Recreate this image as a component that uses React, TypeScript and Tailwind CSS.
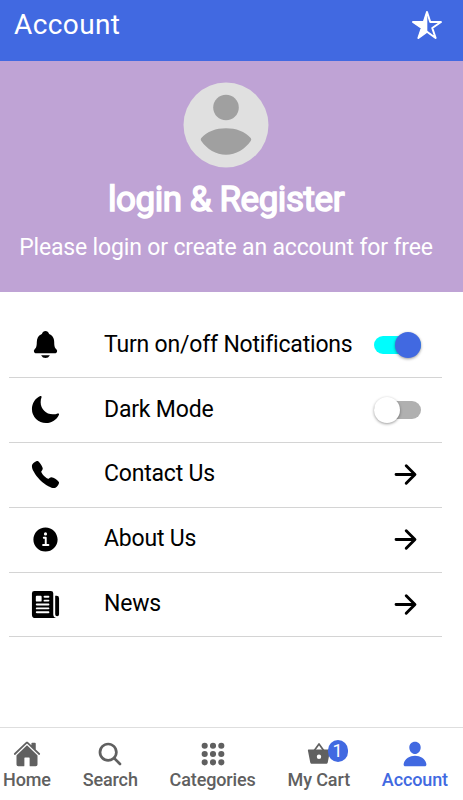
import { useState } from "react"
import {
  IoApps,
  IoArrowForward,
  IoCall,
  IoHome,
  IoInformationCircle,
  IoMoon,
  IoNewspaper,
  IoNotifications,
  IoPerson,
  IoSearch,
  IoStarHalf,
} from "react-icons/io5"

function BasketIcon() {
  return (
    <svg viewBox="0 0 24 28" className="h-7 w-6" fill="currentColor">
      <path
        fillRule="evenodd"
        d="M1.800 9.500H22.200c.6 0 1 .5.9 1.100l-2.300 11.600c-.2 1-.9 1.600-1.900 1.600H5.100c-1 0-1.700-.6-1.900-1.600L.9 10.600c-.1-.6.3-1.100.9-1.100zM12 14.500a2.200 2.200 0 1 0 0 4.400 2.200 2.200 0 0 0 0-4.400z"
      />
      <path d="M7.300 10.500 12 4l4.700 6.500" fill="none" stroke="currentColor" strokeWidth="1.700" strokeLinejoin="round" />
    </svg>
  )
}

function Toggle({ label, on, onChange }: { label: string; on: boolean; onChange: () => void }) {
  return (
    <button
      type="button"
      role="switch"
      aria-label={label}
      aria-checked={on}
      onClick={onChange}
      className={`relative mr-[21px] h-[18px] w-[47px] rounded-full ${on ? "bg-[#00fdfd]" : "bg-[#b0b0b0]"}`}
    >
      <span
        className={`absolute -top-1 size-[26px] rounded-full shadow-[0_1px_3px_rgba(0,0,0,0.4)] ${
          on ? "right-0 bg-[#4169e1]" : "left-0 bg-white"
        }`}
      />
    </button>
  )
}

function Row({ icon, label, children }: { icon: React.ReactNode; label: string; children: React.ReactNode }) {
  return (
    <li className="flex h-[64.9px] items-center border-b border-[#d4d4d4]">
      <span className="ml-[21px] w-[74px] text-[31px]">{icon}</span>
      <span className="flex-1 whitespace-nowrap pb-[1.5px] text-[23px] leading-none tracking-[-0.19px]">{label}</span>
      {children}
    </li>
  )
}

export default function App() {
  const [notifications, setNotifications] = useState(true)
  const [dark, setDark] = useState(false)

  return (
    <div className="flex h-[800px] w-[463px] flex-col overflow-hidden bg-white font-['Roboto',sans-serif] text-black">
      <header className="flex h-[61px] shrink-0 justify-between bg-[#4169e1] pr-5 pl-3.5 text-white">
        <h1 className="pt-[11px] text-[28px] leading-7 tracking-[0.4px]">Account</h1>
        <IoStarHalf className="mt-[9px] text-[32px]" stroke="currentColor" strokeWidth="10" />
      </header>

      <section className="flex h-[231px] shrink-0 flex-col items-center bg-[#bfa3d5] pr-[11px] text-white">
        <svg viewBox="0 0 86 86" className="mt-[21px] mr-[1px] size-[86px] shrink-0">
          <circle cx="43" cy="43" r="42.5" fill="#e0e0e0" />
          <circle cx="43" cy="25.5" r="12.8" fill="#a0a0a0" />
          <path d="M18.300 56C24 49.500 33 46.300 43 46.300S62 49.500 67.700 56c.7.9.7 2 0 2.900C62 67 53 72.700 43 72.700S24 67 18.300 58.900c-.7-.9-.7-2 0-2.900z" fill="#a0a0a0" />
        </svg>
        <h2 className="mt-3 text-[35px] leading-10 font-normal tracking-[-0.45px] [-webkit-text-stroke:1.5px_white]">
          login &amp; Register
        </h2>
        <p className="mt-[14px] whitespace-nowrap text-[23px] leading-7 tracking-[-0.16px]">
          Please login or create an account for free
        </p>
      </section>

      <ul className="mt-[21px] mr-[21px] ml-[9px] flex-1">
        <Row icon={<IoNotifications />} label="Turn on/off Notifications">
          <Toggle label="Notifications" on={notifications} onChange={() => setNotifications(!notifications)} />
        </Row>
        <Row icon={<IoMoon />} label="Dark Mode">
          <Toggle label="Dark Mode" on={dark} onChange={() => setDark(!dark)} />
        </Row>
        <Row icon={<IoCall />} label="Contact Us">
          <IoArrowForward className="mr-[21px] text-[31px]" />
        </Row>
        <Row icon={<IoInformationCircle />} label="About Us">
          <IoArrowForward className="mr-[21px] text-[31px]" />
        </Row>
        <Row icon={<IoNewspaper />} label="News">
          <IoArrowForward className="mr-[21px] text-[31px]" />
        </Row>
      </ul>

      <nav className="flex h-[73px] shrink-0 justify-between border-t border-[#dedede] pt-3 pr-[15px] pl-[3px] text-[18px] leading-6 font-medium tracking-[-0.12px] text-[#606060]">
        <a className="flex flex-col items-center">
          <IoHome className="text-[28px]" />
          Home
        </a>
        <a className="flex flex-col items-center">
          <IoSearch className="text-[28px]" />
          Search
        </a>
        <a className="flex flex-col items-center">
          <IoApps className="text-[28px]" />
          Categories
        </a>
        <a className="relative flex flex-col items-center">
          <BasketIcon />
          My Cart
          <span className="absolute top-0 left-10 flex h-[22px] w-5 items-center justify-center rounded-full bg-[#4169e1] text-[18px] font-normal text-white">
            1
          </span>
        </a>
        <a className="flex flex-col items-center text-[#4169e1]">
          <IoPerson className="text-[28px]" />
          Account
        </a>
      </nav>
    </div>
  )
}
